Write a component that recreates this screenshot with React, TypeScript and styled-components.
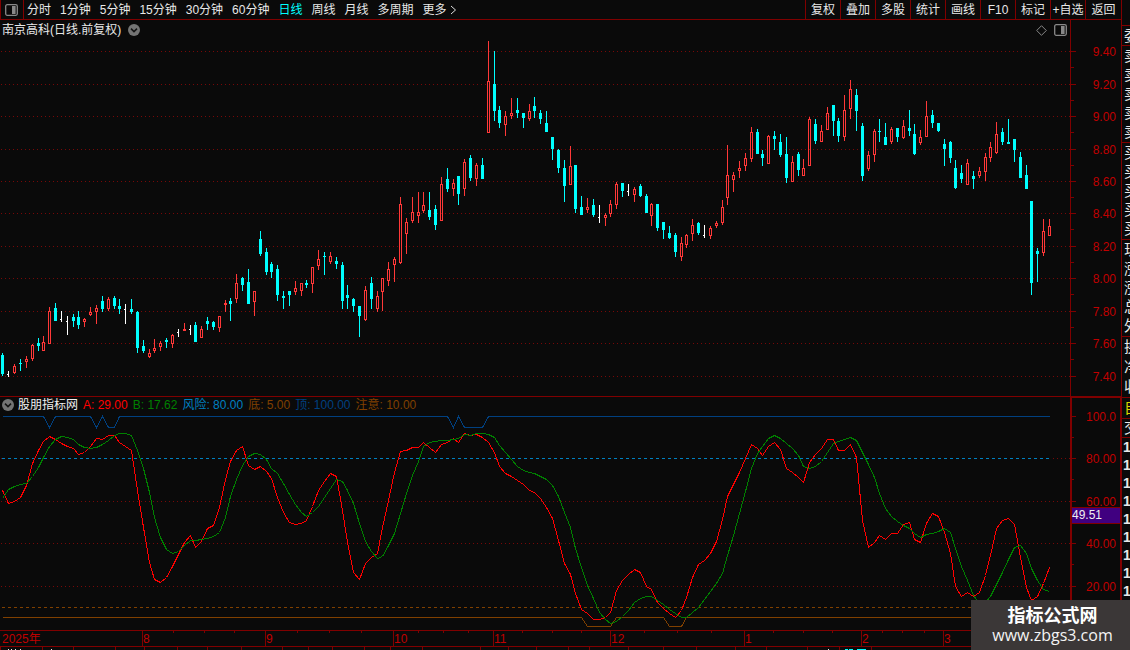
import React from "react";
import styled, { createGlobalStyle } from "styled-components";

const LINE = "#800000";
const LABEL = "#c00000";
const BG = "#0a0a0a";
const FONT = '"Liberation Sans", "Noto Sans CJK SC", sans-serif';

const GlobalStyle = createGlobalStyle`
  * { box-sizing: border-box; }
  body { margin: 0; background: ${BG}; }
  button { font: inherit; color: inherit; background: none; border: 0; padding: 0; margin: 0; cursor: pointer; }
`;

const Page = styled.div`
  position: relative;
  display: grid;
  grid-template-columns: minmax(0, 1fr) 9px;
  height: 100vh;
  overflow: hidden;
  background: ${BG};
  color: #e8e8e8;
  font: 12px/16px ${FONT};
  white-space: nowrap;
`;

const Main = styled.main`
  display: flex;
  flex-direction: column;
  min-width: 0;
`;

const Toolbar = styled.nav`
  display: flex;
  height: 20px;
  border-left: 1px solid ${LINE};
  border-bottom: 1px solid ${LINE};
`;

const IconButton = styled.button<{ $w: number }>`
  display: flex;
  align-items: center;
  justify-content: center;
  width: ${(p) => p.$w}px;
`;

const LayoutToggle = styled(IconButton)`
  border-right: 1px solid ${LINE};
  padding-right: 2px;
`;

const Periods = styled.div`
  display: flex;
  flex: 1;
  align-items: center;
  gap: 9px;
  padding-left: 3px;
`;

const Period = styled.button<{ $active?: boolean }>`
  display: flex;
  align-items: center;
  gap: 3px;
  color: ${(p) => (p.$active ? "#00ffff" : "inherit")};
`;

const Tools = styled.div`
  display: flex;
`;

const Tool = styled.button`
  width: 35px;
  border-left: 1px solid ${LINE};
  text-align: center;

  &:last-child {
    width: 36px;
  }
`;

const Pane = styled.section`
  display: flex;
  border-bottom: 1px solid ${LINE};
`;

const PaneBody = styled.div`
  flex: 1;
  min-width: 0;
`;

const PaneTitle = styled.header<{ $h: number; $gap: number }>`
  display: flex;
  align-items: center;
  gap: ${(p) => p.$gap}px;
  height: ${(p) => p.$h}px;
  padding: 0 3px 0 2px;
`;

const Readings = styled.div`
  display: flex;
  gap: 5px;
`;

const Reading = styled.span<{ $color: string }>`
  color: ${(p) => p.$color};
`;

const Spacer = styled.span`
  flex: 1;
`;

const Plot = styled.svg<{ $h: number }>`
  display: block;
  width: 100%;
  height: ${(p) => p.$h}px;
`;

const Axis = styled.svg<{ $h: number; $heavy?: boolean }>`
  display: block;
  flex: none;
  width: 51px;
  height: ${(p) => p.$h}px;
  border: 0 solid ${LINE};
  border-width: ${(p) => (p.$heavy ? "1px 1px 0 2px" : "0 0 0 1px")};
`;

const QuotePanel = styled.aside`
  display: flex;
  flex-direction: column;
  overflow: hidden;
  border-left: 1px solid ${LINE};
  padding-top: 25px;
  font-size: 15px;
`;

const QuoteGroup = styled.div<{ $row: number; $color?: string }>`
  border-top: 1px solid ${LINE};
  padding-left: 2px;
  line-height: ${(p) => p.$row}px;
  color: ${(p) => p.$color ?? "inherit"};
`;

const QuoteBook = styled(QuoteGroup)`
  padding-bottom: 1px;
`;

const QuoteRow = styled.div``;

const Trades = styled(QuoteGroup)`
  padding-left: 1px;
  font-size: 14px;
  font-weight: bold;
`;

const Watermark = styled.div`
  position: absolute;
  right: 0;
  bottom: 0;
  width: 159px;
  height: 50px;
  padding: 4px 0 0 4px;
  background: #3b3737;
  color: #fff;
  text-align: center;
`;

const SiteName = styled.div`
  font: bold 18px/20px "Noto Sans CJK SC", sans-serif;
`;

const SiteLink = styled.a`
  display: block;
  color: #f4f4f4;
  text-decoration: none;
  font: 16px/22px "Open Sans", sans-serif;
`;

/* One entry per trading day: kind, high, body top, body bottom, low.
   r = rising (hollow), c = falling (filled), w = unchanged. */
const DAYS = `c353,355,374,376 w371,374,374,377 r364,366,373,374 c359,363,364,371 r356,359,362,368 r344,345,359,361
c338,343,346,351 r336,342,351,351 r307,311,344,344 c303,308,321,321 w311,319,319,322 w316,321,321,335
c314,317,321,327 c311,317,325,329 r318,319,322,327 r307,312,315,316 r305,308,312,324 c296,301,309,312
r297,299,309,311 c296,298,306,309 c299,306,309,314 w304,309,309,324 c299,309,312,314 c311,312,348,353
c340,346,351,353 r349,353,357,358 r339,348,351,353 r341,343,347,351 c338,340,342,348 r334,335,344,348
w329,332,332,337 r323,329,331,331 w325,329,329,335 c322,325,342,342 r326,329,338,338 c317,321,324,330
c321,322,327,330 r316,316,328,332 r300,303,305,312 c298,301,304,321 r274,283,299,303 c277,278,285,291
c269,282,304,304 r291,291,302,316 c231,239,254,256 c248,252,272,275 c262,264,272,278 c265,269,295,301
c291,296,298,309 c291,291,295,306 r281,288,292,295 r283,283,291,296 c280,283,285,288 r267,267,284,293
r250,259,266,270 c252,256,257,275 r252,256,262,264 c257,261,264,269 c262,265,301,309 c285,295,298,309
c298,299,306,312 c306,306,316,337 r286,290,320,321 c277,283,299,309 r291,296,309,312 r278,278,292,311
r262,269,281,286 r257,259,265,282 r197,204,263,264 r218,222,234,254 r197,212,221,223 r192,212,216,223
r192,205,211,213 c192,210,217,220 c205,209,225,230 r177,184,221,221 c168,179,189,192 r179,183,189,196
c176,176,194,205 r159,162,189,196 c155,158,178,181 r163,165,179,186 c158,165,179,179 r41,81,133,133
c51,84,111,121 c106,110,123,128 r111,116,125,136 r98,113,116,119 c98,110,113,118 c113,113,118,128
r104,111,119,121 c97,106,111,118 c110,113,119,124 c111,123,132,132 c137,137,149,160 c149,150,168,173
c160,168,186,202 r146,166,185,185 c165,165,209,213 c196,207,215,215 r198,207,210,213 c199,205,215,217
w205,217,217,223 r213,215,218,226 r200,204,214,217 r182,184,205,209 c183,183,191,197 w184,191,191,196
r187,189,195,202 c184,186,196,197 c194,196,213,213 r203,204,216,226 c204,204,228,231 c222,222,230,239
c226,233,238,239 c233,235,252,257 r237,243,257,261 r234,235,245,248 r219,225,234,241 c222,223,233,235
w225,235,235,238 r226,228,236,239 r221,223,226,228 r200,207,223,225 r145,175,198,205 r172,175,180,192
r161,168,171,178 r153,158,166,171 r127,132,159,162 c129,132,154,154 c150,154,158,166 r135,136,164,164
c131,136,139,150 c134,142,155,157 c137,154,178,183 r156,162,182,182 c152,154,170,176 r159,168,176,176
r117,119,166,166 c119,124,141,144 r125,131,142,142 r107,113,130,130 c105,105,121,136 c118,121,136,142
r95,110,137,141 r80,89,109,119 c89,95,111,131 c123,126,176,181 r151,155,169,171 r129,131,155,162
c119,131,132,142 c123,137,145,145 r127,129,142,144 c128,128,137,142 r120,126,138,139 c110,128,131,136
c124,134,154,155 r130,137,143,145 r101,116,137,137 c110,115,123,128 c123,123,131,132 c139,144,149,166
c141,142,158,163 c160,168,188,189 c165,173,179,183 r159,163,185,185 c171,176,179,189 r167,171,176,178
r153,157,172,181 r142,147,158,162 r122,134,153,154 c128,132,142,145 c119,142,144,144 c139,139,150,162
c152,157,178,178 c165,175,189,189 c201,201,283,295 c248,251,254,282 r219,231,253,256 r219,226,236,236`
  .split(/\s+/)
  .map((s) => ({ kind: s[0], v: s.slice(1).split(",").map(Number) }));

const FAST = [
  490, 503, 501, 497, 485, 463, 450, 441, 436, 439, 443, 446, 448, 454, 452, 446, 438, 439, 435, 435,
  442, 446, 450, 490, 527, 562, 579, 582, 577, 566, 554, 542, 535, 547, 541, 528, 525, 507, 479, 461,
  450, 446, 465, 469, 466, 471, 478, 497, 512, 522, 524, 523, 520, 506, 490, 481, 473, 476, 510, 542,
  572, 579, 563, 557, 553, 527, 500, 472, 451, 450, 447, 447, 442, 447, 452, 444, 442, 438, 442, 433,
  435, 434, 437, 442, 452, 466, 473, 476, 480, 484, 490, 492, 498, 507, 518, 540, 563, 574, 593, 609,
  613, 619, 619, 617, 612, 590, 580, 574, 569, 572, 586, 589, 602, 608, 613, 617, 610, 597, 577, 564,
  560, 553, 541, 519, 496, 484, 472, 458, 444, 448, 455, 446, 442, 449, 468, 472, 477, 482, 462, 454,
  448, 439, 439, 450, 450, 444, 457, 520, 547, 542, 535, 539, 533, 533, 524, 522, 539, 542, 523, 513,
  516, 532, 553, 586, 596, 592, 596, 592, 575, 555, 528, 520, 518, 524, 557, 587, 600, 596, 583, 567,
];

const SLOW = [
  498, 489, 486, 484, 483, 476, 467, 457, 446, 439, 436, 437, 439, 444, 447, 448, 447, 444, 440, 435,
  433, 433, 435, 450, 468, 492, 517, 537, 549, 553, 551, 545, 540, 540, 539, 538, 536, 532, 517, 496,
  479, 465, 456, 453, 454, 459, 468, 473, 483, 494, 504, 512, 516, 512, 506, 497, 488, 479, 481, 490,
  503, 523, 541, 551, 558, 556, 545, 533, 513, 493, 475, 461, 446, 442, 441, 440, 440, 439, 438, 434,
  435, 433, 433, 434, 437, 445, 452, 459, 466, 470, 472, 473, 476, 479, 485, 496, 512, 527, 548, 567,
  585, 598, 612, 619, 623, 621, 616, 610, 602, 598, 596, 596, 600, 604, 609, 613, 617, 617, 612, 607,
  599, 591, 583, 573, 555, 535, 513, 491, 468, 453, 446, 438, 435, 438, 443, 448, 455, 466, 468, 466,
  461, 452, 443, 441, 439, 437, 440, 452, 464, 477, 493, 508, 516, 521, 525, 528, 533, 537, 534, 533,
  531, 528, 532, 548, 566, 580, 595, 603, 602, 596, 584, 572, 559, 547, 545, 553, 568, 580, 589, 591,
];

/* Days are six pixels apart, with two pixels taken back every thirteen days. */
const dayX = (i: number) => 2 + 6 * i - Math.floor((2 * i) / 13);

const line = (values: number[]) => values.map((v, i) => `${dayX(i) + 0.5},${v + 0.5}`).join(" ");

/* A flat signal line that steps to another level on the listed days. */
const signal = (base: number, hit: number, days: number[]) =>
  line(FAST.map((_, i) => (days.includes(i) ? hit : base)));

const PRICES: [string, number][] = [
  ["9.40", 51], ["9.20", 84], ["9.00", 116], ["8.80", 149], ["8.60", 181], ["8.40", 213],
  ["8.20", 246], ["8.00", 278], ["7.80", 311], ["7.60", 343], ["7.40", 376],
];
const LEVELS: [string, number][] = [
  ["100.0", 416], ["80.00", 458], ["60.00", 501], ["40.00", 543], ["20.00", 586],
];
const MONTHS: [string, number][] = [
  ["8", 142], ["9", 265], ["10", 393], ["11", 493], ["12", 610], ["1", 744], ["2", 861], ["3", 943],
];
const WEEKS = [173, 204, 234, 297, 329, 361, 418, 443, 468, 522, 552, 581, 644, 677, 711, 773, 803, 832, 882, 902, 924];
const TABS = [0, 42, 73, 115, 144, 177, 207, 241, 282, 308, 332, 364, 390, 422, 480, 508, 536, 568, 589, 628, 663, 696, 735, 766, 807, 839, 871];

function Grid({ rows }: { rows: [string, number][] }) {
  return (
    <>
      {rows.map(([t, y]) => (
        <line key={t} x1="1" x2="100%" y1={y + 0.5} y2={y + 0.5} stroke="#780808" strokeDasharray="1 3" />
      ))}
    </>
  );
}

function Candle({ i, kind, v }: { i: number; kind: string; v: number[] }) {
  const x = dayX(i);
  const [high, top, bottom, low] = v;
  if (kind === "w")
    return (
      <g fill="#ffffff">
        <rect x={x} y={high} width="1" height={low - high} />
        <rect x={x - 1} y={top} width="1" height="1" />
      </g>
    );
  if (kind === "c")
    return (
      <g fill="#00ffff">
        <rect x={x} y={high} width="1" height={low - high} />
        <rect x={x - 1} y={top} width="3" height={bottom - top} />
      </g>
    );
  return (
    <g fill="#ff3838">
      <rect x={x} y={high} width="1" height={top - high} />
      <rect x={x} y={bottom} width="1" height={low - bottom} />
      <rect x={x - 0.5} y={top + 0.5} width="2" height={bottom - top - 1} fill="none" stroke="#ff3838" />
    </g>
  );
}

function Scale({ rows, step, offset }: { rows: [string, number][]; step: number; offset: number }) {
  return (
    <g fill={LABEL} fontSize="12">
      {rows.map(([t, y], n) => (
        <g key={t}>
          <rect x="0" y={y} width={5 - offset} height="1" fill={LINE} />
          {n < rows.length - 1 && <rect x="0" y={y + step} width={3 - offset} height="1" fill={LINE} />}
          <text x={45 - offset} y={y + 5} textAnchor="end">{t}</text>
        </g>
      ))}
    </g>
  );
}

const PanelIcon = () => (
  <svg width="13" height="12" viewBox="0 0 13 12" fill="none">
    <rect x="0.7" y="0.7" width="11.6" height="10.6" rx="1.5" stroke="#888" strokeWidth="1.3" />
    <rect x="7" y="2" width="3.6" height="8" fill="#888" />
  </svg>
);

const FoldIcon = () => (
  <svg width="12" height="12" viewBox="0 0 12 12">
    <circle cx="6" cy="6" r="6" fill="#747474" />
    <path d="M3 4.6 6 7.6 9 4.6" fill="none" stroke="#141414" strokeWidth="1.5" />
  </svg>
);

const PERIODS = ["分时", "1分钟", "5分钟", "15分钟", "30分钟", "60分钟", "日线", "周线", "月线", "多周期"];
const TOOLS = ["复权", "叠加", "多股", "统计", "画线", "F10", "标记", "+自选", "返回"];

export default function App() {
  return (
    <Page>
      <GlobalStyle />
      <Main>
        <Toolbar>
          <LayoutToggle $w={23} aria-label="布局"><PanelIcon /></LayoutToggle>
          <Periods>
            {PERIODS.map((p) => <Period key={p} $active={p === "日线"}>{p}</Period>)}
            <Period>
              更多
              <svg width="7" height="10" viewBox="0 0 7 10"><path d="M1 1 5.5 5 1 9" fill="none" stroke="#ddd" /></svg>
            </Period>
          </Periods>
          <Tools>{TOOLS.map((t) => <Tool key={t}>{t}</Tool>)}</Tools>
        </Toolbar>

        <Pane>
          <PaneBody>
            <PaneTitle $h={20} $gap={7}>
              <span>南京高科(日线.前复权)</span>
              <IconButton $w={12} aria-label="展开"><FoldIcon /></IconButton>
              <Spacer />
              <IconButton $w={11} aria-label="标记点">
                <svg width="11" height="11" viewBox="0 0 11 11"><path d="M5.5.7 10.3 5.5 5.5 10.3.7 5.5Z" fill="none" stroke="#888" /></svg>
              </IconButton>
              <IconButton $w={13} aria-label="侧栏"><PanelIcon /></IconButton>
            </PaneTitle>
            <Plot $h={356} shapeRendering="crispEdges">
              <g transform="translate(0 -40)">
                <Grid rows={PRICES} />
                {DAYS.map((d, i) => <Candle key={i} i={i} kind={d.kind} v={d.v} />)}
              </g>
            </Plot>
          </PaneBody>
          <Axis $h={376}>
            <g transform="translate(0 -20)"><Scale rows={PRICES} step={16} offset={0} /></g>
          </Axis>
        </Pane>

        <Pane>
          <PaneBody>
            <PaneTitle $h={16} $gap={4}>
              <IconButton $w={12} aria-label="折叠"><FoldIcon /></IconButton>
              <Readings>
                <Reading $color="#f0f0f0">股朋指标网</Reading>
                <Reading $color="#ff0000">A: 29.00</Reading>
                <Reading $color="#008000">B: 17.62</Reading>
                <Reading $color="#0080c0">风险: 80.00</Reading>
                <Reading $color="#804000">底: 5.00</Reading>
                <Reading $color="#004080">顶: 100.00</Reading>
                <Reading $color="#804000">注意: 10.00</Reading>
              </Readings>
            </PaneTitle>
            <Plot $h={217} shapeRendering="crispEdges" fill="none">
              <g transform="translate(0 -413)">
                <Grid rows={LEVELS.slice(1)} />
                <line x1="2" x2="1050" y1="458.5" y2="458.5" stroke={BG} />
                <line x1="2" x2="1050" y1="458.5" y2="458.5" stroke="#0080c0" strokeDasharray="3 3" />
                <line x1="2" x2="1050" y1="607.5" y2="607.5" stroke="#804000" strokeDasharray="3 3" />
                <polyline points={signal(416, 427, [8, 16, 18, 19, 77, 79, 80, 81, 82])} stroke="#004080" />
                <polyline points={signal(617, 626, [100, 101, 102, 103, 104, 114, 115, 116])} stroke="#804000" />
                <polyline points={line(FAST)} stroke="#ff0000" />
                <polyline points={line(SLOW)} stroke="#008000" />
              </g>
            </Plot>
          </PaneBody>
          <Axis $h={233} $heavy>
            <g transform="translate(0 -398)">
              <Scale rows={LEVELS} step={21} offset={1} />
              <rect x="0" y="507" width="48" height="16" fill="#400080" />
              <rect x="0" y="507" width="48" height="1" fill={LINE} />
              <rect x="0" y="523" width="48" height="1" fill={LINE} />
              <text x="0" y="519" fontSize="12" fill="#f0f0f0">49.51</text>
            </g>
          </Axis>
        </Pane>

        <Plot $h={20}>
          <g fill={LABEL} fontSize="12">
            <text x="2" y="12">2025年</text>
            {MONTHS.map(([m, x]) => (
              <g key={m}>
                <rect x={x} y="0" width="1" height="15" fill={LINE} />
                <text x={x + 1} y="12">{m}</text>
              </g>
            ))}
          </g>
          <g fill={LINE}>
            <rect x="0" y="15" width="100%" height="1" />
            {WEEKS.map((x) => <rect key={x} x={x} y="0" width="1" height="2" />)}
            {TABS.map((x) => <rect key={x} x={x} y="15" width="1" height="4" />)}
          </g>
          <g fill="#e8e8e8">
            {[8, 11, 15, 20, 51, 828].map((x) => <rect key={x} x={x} y="18" width="1" height="1" />)}
            <rect x="845" y="18" width="3" height="1" fill="#00ffff" />
            <rect x="849" y="18" width="4" height="1" fill="#00ffff" />
            <rect x="857" y="18" width="9" height="1" fill="#00ffff" />
          </g>
        </Plot>
      </Main>

      <QuotePanel>
        <QuoteGroup $row={19}><QuoteRow>委</QuoteRow></QuoteGroup>
        <QuoteBook $row={19}>{[..."卖卖卖卖卖"].map((c, i) => <QuoteRow key={i}>{c}</QuoteRow>)}</QuoteBook>
        <QuoteBook $row={19}>{[..."买买买买买"].map((c, i) => <QuoteRow key={i}>{c}</QuoteRow>)}</QuoteBook>
        <QuoteBook $row={19}>{[..."现涨涨总外"].map((c, i) => <QuoteRow key={i}>{c}</QuoteRow>)}</QuoteBook>
        <QuoteGroup $row={20}>{[..."换净收"].map((c, i) => <QuoteRow key={i}>{c}</QuoteRow>)}</QuoteGroup>
        <QuoteGroup $row={20} $color="#d8d800"><QuoteRow>自</QuoteRow></QuoteGroup>
        <QuoteGroup $row={18}><QuoteRow>交</QuoteRow></QuoteGroup>
        <Trades $row={18}>{[..."111111111"].map((c, i) => <QuoteRow key={i}>{c}</QuoteRow>)}</Trades>
      </QuotePanel>

      <Watermark>
        <SiteName>指标公式网</SiteName>
        <SiteLink href="#">www.zbgs3.com</SiteLink>
      </Watermark>
    </Page>
  );
}
